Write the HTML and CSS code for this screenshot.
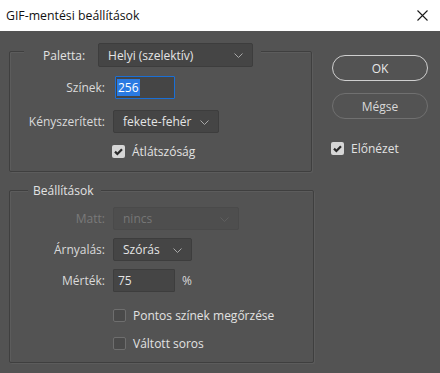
FILE: index.html
```html
<!DOCTYPE html>
<html lang="hu">
<head>
<meta charset="utf-8">
<title>GIF-mentési beállítások</title>
<link rel="stylesheet" href="styles.css">
</head>
<body>
<div class="titlebar">
  <span class="title">GIF-mentési beállítások</span>
  <svg class="close" width="11" height="11" viewBox="0 0 11 11"><path d="M0.5 0.5 L10.5 10.5 M10.5 0.5 L0.5 10.5" stroke="#1a1a1a" stroke-width="1.1" fill="none"/></svg>
</div>
<div class="dialog">
  <div class="left">
    <div class="group g1">
      <div class="legend leg1">
        <span class="leg-label">Paletta:</span>
        <div class="select sel-paletta"><span>Helyi (szelektív)</span><svg class="chev" width="9" height="5" viewBox="0 0 9 5"><path d="M0.5 0.5 L4.5 4.5 L8.5 0.5" stroke="#a8a8a8" fill="none"/></svg></div>
      </div>
      <div class="row r-szinek">
        <span class="lbl">Színek:</span>
        <div class="input focus sz-in"><span class="hl">256</span></div>
      </div>
      <div class="row r-keny">
        <span class="lbl">Kényszerített:</span>
        <div class="select sel-keny"><span>fekete-fehér</span><svg class="chev" width="9" height="5" viewBox="0 0 9 5"><path d="M0.5 0.5 L4.5 4.5 L8.5 0.5" stroke="#a8a8a8" fill="none"/></svg></div>
      </div>
      <div class="check-row r-atl">
        <span class="cb on"><svg width="13" height="13" viewBox="0 0 13 13"><path d="M3 6.6 L5.4 9 L10 4.2" stroke="#2a2a2a" stroke-width="2.2" fill="none"/></svg></span>
        <span class="cb-text">Átlátszóság</span>
      </div>
    </div>
    <div class="group g2">
      <div class="legend leg2"><span class="leg-label">Beállítások</span></div>
      <div class="row r-matt">
        <span class="lbl disabled">Matt:</span>
        <div class="select sel-matt off"><span>nincs</span><svg class="chev" width="9" height="5" viewBox="0 0 9 5"><path d="M0.5 0.5 L4.5 4.5 L8.5 0.5" stroke="#5e5e5e" fill="none"/></svg></div>
      </div>
      <div class="row r-arny">
        <span class="lbl">Árnyalás:</span>
        <div class="select sel-arny"><span>Szórás</span><svg class="chev" width="9" height="5" viewBox="0 0 9 5"><path d="M0.5 0.5 L4.5 4.5 L8.5 0.5" stroke="#a8a8a8" fill="none"/></svg></div>
      </div>
      <div class="row r-mert">
        <span class="lbl">Mérték:</span>
        <div class="input mert-in"><span>75</span></div>
        <span class="unit">%</span>
      </div>
      <div class="check-row r-pontos">
        <span class="cb"></span>
        <span class="cb-text">Pontos színek megőrzése</span>
      </div>
      <div class="check-row r-valt">
        <span class="cb"></span>
        <span class="cb-text">Váltott soros</span>
      </div>
    </div>
  </div>
  <div class="right">
    <div class="btn primary">OK</div>
    <div class="btn secondary">Mégse</div>
    <div class="check-row r-preview">
      <span class="cb on"><svg width="13" height="13" viewBox="0 0 13 13"><path d="M3 6.6 L5.4 9 L10 4.2" stroke="#2a2a2a" stroke-width="2.2" fill="none"/></svg></span>
      <span class="cb-text">Előnézet</span>
    </div>
  </div>
</div>
</body>
</html>
```
FILE: styles.css
```css
* { box-sizing: border-box; }
html, body {
  margin: 0;
  padding: 0;
  width: 440px;
  height: 373px;
  overflow: hidden;
  background: #535353;
  font-family: "Open Sans", "Noto Sans", sans-serif;
  font-size: 12px;
  color: #d8d8d8;
}
.titlebar {
  height: 31px;
  background: #ffffff;
  display: flex;
  align-items: center;
  justify-content: space-between;
  padding: 0 12px 1px 6px;
}
.title {
  color: #111;
  font-size: 12.3px;
}
.close { display: block; margin-top: 1px; }

.dialog {
  display: flex;
  align-items: flex-start;
}
.left {
  padding: 20px 0 0 9px;
  display: flex;
  flex-direction: column;
}
.group {
  border: 1px solid #3f3f3f;
  border-radius: 2px;
  box-shadow: 1px 1px 0 #5c5c5c, inset 1px 1px 0 #5c5c5c;
  display: flex;
  flex-direction: column;
}
.g1 { width: 303px; padding-bottom: 11px; }
.g2 { width: 305px; margin-top: 18px; padding-bottom: 10px; }

.legend {
  align-self: flex-start;
  display: flex;
  align-items: center;
  background: #535353;
  margin-top: -9px;
}
.leg1 { margin-left: 14px; padding: 0 8px 0 19px; height: 24px; }
.leg1 .leg-label { margin-right: 13px; }
.leg2 { margin-left: 18px; padding: 0 8px 0 5px; height: 16px; }
.leg-label { color: #e2e2e2; }

.row {
  display: flex;
  align-items: center;
  height: 23px;
}
.lbl {
  width: 95px;
  flex: none;
  text-align: right;
  margin-right: 8px;
  color: #dadada;
}
.lbl.disabled { color: #7a7a7a; }

.select {
  display: flex;
  align-items: center;
  justify-content: space-between;
  height: 23px;
  background: #454545;
  border: 1px solid #3d3d3d;
  border-radius: 2px;
  padding: 0 9px 0 9px;
  color: #e4e4e4;
}
.select .chev { flex: none; margin-top: 1px; }
.sel-paletta { width: 155px; height: 24px; }
.sel-keny { width: 106px; }
.sel-matt { width: 126px; }
.sel-arny { width: 79px; }
.select.off {
  background: #4e4e4e;
  border-color: #4a4a4a;
  color: #767676;
}

.input {
  height: 23px;
  background: #454545;
  border: 1px solid #3d3d3d;
  border-radius: 1px;
  display: flex;
  align-items: center;
  padding-left: 4px;
  color: #e4e4e4;
}
.input.focus { border-color: #1a6fd6; padding-left: 1px; }
.sz-in { width: 60px; margin-left: 2px; }
.hl {
  background: #2a7ae2;
  color: #ffffff;
  padding: 0 1px;
  line-height: 17px;
}
.mert-in { width: 62px; }
.unit { margin-left: 7px; color: #dadada; }

.check-row {
  display: flex;
  align-items: center;
  height: 18px;
}
.cb {
  width: 13px;
  height: 13px;
  border-radius: 2px;
  background: #4a4a4a;
  border: 1px solid #6e6e6e;
  flex: none;
}
.cb.on {
  background: #d6d6d6;
  border: none;
}
.cb svg { display: block; }
.cb-text { margin-left: 7px; color: #e2e2e2; }

.r-szinek { margin-top: 9px; }
.r-keny { margin-top: 11px; }
.r-atl { margin-top: 9px; padding-left: 102px; }
.r-matt { margin-top: 9px; }
.r-arny { margin-top: 8px; }
.r-mert { margin-top: 8px; }
.r-pontos { margin-top: 14px; padding-left: 103px; }
.r-valt { margin-top: 10px; padding-left: 103px; }

.right {
  margin-left: 18px;
  padding-top: 24px;
  display: flex;
  flex-direction: column;
}
.btn {
  width: 96px;
  height: 26px;
  border-radius: 13px;
  display: flex;
  align-items: center;
  justify-content: center;
  font-size: 12px;
}
.btn.primary { border: 1.5px solid #cfcfcf; color: #e8e8e8; }
.btn.secondary { margin-top: 12px; border: 1.5px solid #707070; color: #d8d8d8; }
.r-preview { margin-top: 20px; margin-left: -1px; }
```
